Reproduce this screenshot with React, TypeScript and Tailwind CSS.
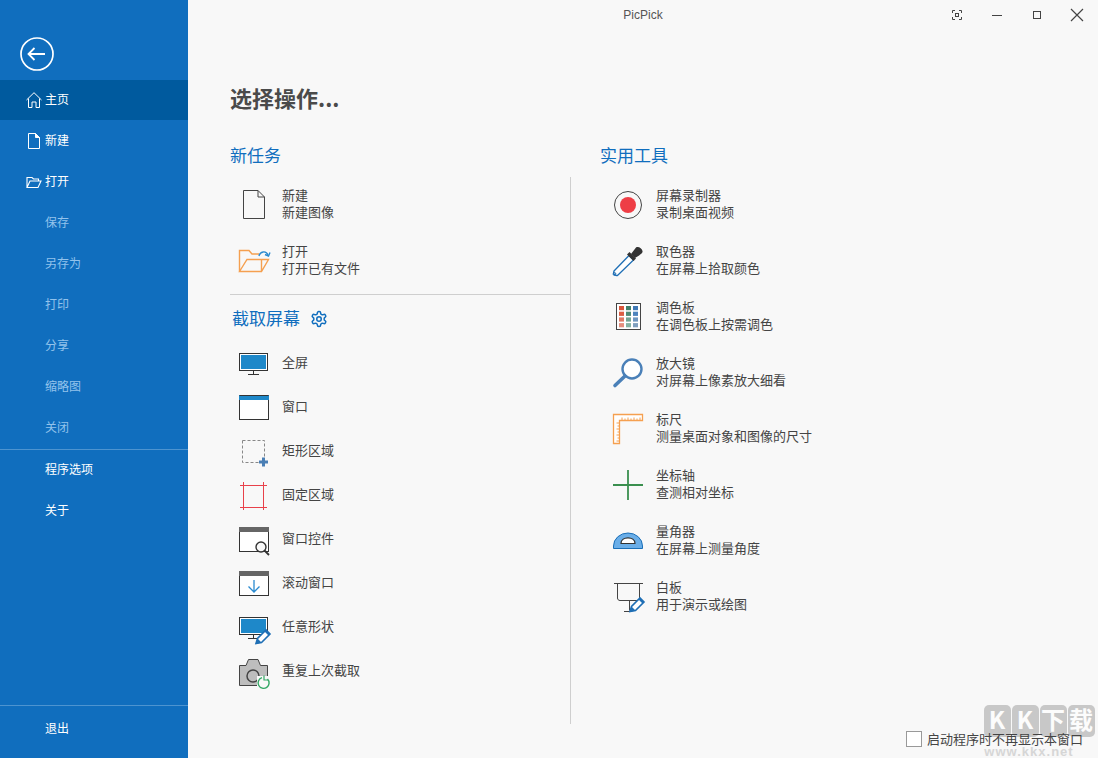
import { ReactNode } from "react";

const font = { fontFamily: '"Noto Sans CJK SC", "Liberation Sans", sans-serif' };

const Icon = ({ children, size = 32 }: { children: ReactNode; size?: number }) => (
  <svg width={size} height={size} viewBox={`0 0 ${size} ${size}`} fill="none" className="shrink-0 overflow-visible">
    {children}
  </svg>
);

const Pen = ({ x, y }: { x: number; y: number }) => (
  <g transform={`translate(${x} ${y})`}>
    <path d="M1 14.5 2.5 9.5 11 1 15 5 6.500 13.500Z" fill="#fff" stroke="#1f6fb5" strokeWidth="1.600" />
    <path d="M0.500 15 2.500 9.500 6.500 13.500Z M9.500 2.500 13.500 6.500 15 5 11 1Z" fill="#1f6fb5" />
  </g>
);

const icons: Record<string, ReactNode> = {
  doc: (
    <Icon>
      <path d="M5.500 1.500H20L26.500 8V29.500H5.500Z M20 1.500V8H26.500" stroke="#444" />
    </Icon>
  ),
  open: (
    <Icon>
      <path d="M1.500 26.500V5.500H11L14 9H21 M1.500 26.500 9 14.500H30.500L23.500 26.500Z M23.500 26.500V14.500" stroke="#f5a050" strokeWidth="1.400" />
      <path d="M21 11C22 6.500 28 5 30 10" stroke="#2b8bd0" strokeWidth="1.400" />
      <path d="M27 9.500 30.500 11 32 7.500" stroke="#2b8bd0" strokeWidth="1.400" />
    </Icon>
  ),
  monitor: (
    <Icon>
      <rect x="1.500" y="6.500" width="28" height="17" fill="#fff" stroke="#333" />
      <rect x="3" y="8" width="25" height="14" fill="#1e88c9" />
      <path d="M15.500 24V27.500 M10 27.500H21" stroke="#333" />
    </Icon>
  ),
  window: (
    <Icon>
      <rect x="1.500" y="4.500" width="29" height="24" fill="#fff" stroke="#333" />
      <rect x="1" y="4" width="30" height="5" fill="#1e88c9" />
      <path d="M1.500 4.500H30.500" stroke="#333" />
    </Icon>
  ),
  rect: (
    <Icon>
      <rect x="4.500" y="5.500" width="22" height="22" stroke="#888" strokeDasharray="3 2" />
      <path d="M25.500 22.500V31.500 M21 27H30" stroke="#4a7fb5" strokeWidth="3" />
    </Icon>
  ),
  fixed: (
    <Icon>
      <path d="M2 6.500H29 M2 28.500H29 M5.500 3V31 M25.500 3V31" stroke="#e8414a" />
    </Icon>
  ),
  control: (
    <Icon>
      <rect x="1.500" y="4.500" width="29" height="24" fill="#fff" stroke="#333" />
      <rect x="1" y="4" width="30" height="5" fill="#666" />
      <circle cx="23" cy="24" r="5" fill="#f8f8f8" stroke="#333" strokeWidth="1.400" />
      <path d="M26.500 27.500 31 32" stroke="#333" strokeWidth="1.800" />
    </Icon>
  ),
  scroll: (
    <Icon>
      <rect x="1.500" y="4.500" width="29" height="24" fill="#fff" stroke="#333" />
      <rect x="1" y="4" width="30" height="5" fill="#666" />
      <path d="M16 13V24.500 M10.500 19.500 16 25 21.500 19.500" stroke="#2b8bd0" strokeWidth="1.300" />
    </Icon>
  ),
  free: (
    <Icon>
      <rect x="1.500" y="6.500" width="28" height="17" fill="#fff" stroke="#333" />
      <rect x="3" y="8" width="25" height="14" fill="#1e88c9" />
      <path d="M15.500 24V27.500 M10 27.500H19" stroke="#333" />
      <Pen x={17} y={18} />
    </Icon>
  ),
  camera: (
    <Icon>
      <path d="M1.500 30.500V10.500H8L10.500 4.500H20L22.500 10.500H29.500V30.500Z" fill="#bdbdbd" stroke="#444" />
      <circle cx="15" cy="21" r="6" fill="#bdbdbd" stroke="#444" strokeWidth="1.500" />
      <rect x="19" y="21" width="13" height="13" fill="#f8f8f8" />
      <path d="M24 22.600A5.500 5.500 0 1 0 29.500 24" stroke="#35a866" strokeWidth="1.400" />
      <path d="M26 20.500V25H30" stroke="#35a866" strokeWidth="1.200" />
    </Icon>
  ),
  record: (
    <Icon>
      <circle cx="17" cy="16" r="13.500" fill="#f8f8f8" stroke="#444" />
      <circle cx="17" cy="16" r="8" fill="#ee3e46" />
    </Icon>
  ),
  dropper: (
    <Icon>
      <path d="M3 26 18 10.500 22.500 15 7 30C5.500 31.500 1.500 30 3 26Z" fill="#fff" stroke="#1f6fb5" strokeWidth="1.300" />
      <circle cx="3.500" cy="29" r="1.400" stroke="#1f6fb5" />
      <path d="M16 9.500 18.500 7 25 13.500 22.500 16Z" fill="#333" />
      <path d="M20 9 25 2.500C27 1 31 3 31.500 6 32 8 30 9.500 24 13Z" fill="#333" />
    </Icon>
  ),
  palette: (
    <Icon>
      <rect x="5.500" y="2.500" width="24" height="26" fill="#fff" stroke="#444" />
      {[
        ["#d9543a", "#41806a", "#3f78b5"],
        ["#dc5f45", "#4f8c76", "#4d83bd"],
        ["#e07a66", "#72a594", "#6f97c0"],
        ["#e58f7e", "#85b3a3", "#7f9fbf"],
      ].map((row, r) =>
        row.map((c, i) => <rect key={`${r}-${i}`} x={8 + i * 7} y={5 + r * 5.700} width="5" height="4.200" fill={c} />),
      )}
    </Icon>
  ),
  magnifier: (
    <Icon>
      <circle cx="21" cy="12" r="9.500" fill="#fff" stroke="#4a80b8" strokeWidth="2.400" />
      <path d="M14 19 4 28.500" stroke="#4a80b8" strokeWidth="3.600" strokeLinecap="round" />
    </Icon>
  ),
  ruler: (
    <Icon>
      <path d="M2.500 1.500H31.500V7.500H8.500V30.500H2.500Z" fill="#fff" stroke="#f5a050" strokeWidth="1.300" />
      <path d="M11 7V4.500 M14 7V5.500 M17 7V4.500 M20 7V5.500 M23 7V4.500 M26 7V5.500 M29 7V4.500 M8 10H5.500 M8 13H6.500 M8 16H5.500 M8 19H6.500 M8 22H5.500 M8 25H6.500 M8 28H5.500" stroke="#f5a050" />
    </Icon>
  ),
  axis: (
    <Icon>
      <path d="M17 1V31 M2 16H32" stroke="#3a8f4f" strokeWidth="1.800" />
    </Icon>
  ),
  protractor: (
    <Icon>
      <path d="M2.500 23.500V21A14.500 13 0 0 1 31.500 21V23.500Z" fill="#6aaee8" stroke="#1a6fb8" />
      <path d="M10 18.500C10 11 24 11 24 18.500Z" fill="#fff" stroke="#333" strokeWidth="1.200" />
    </Icon>
  ),
  board: (
    <Icon>
      <path d="M3 2.500H32 M6.500 2.500V17C6.500 18.500 7.500 19.500 9 19.500H28.500V2.500 M18.500 19.500V29.500 M13 30.500H21" stroke="#444" />
      <Pen x={18} y={16} />
    </Icon>
  ),
};

const nav = [
  { label: "主页", icon: "home", active: true },
  { label: "新建", icon: "new" },
  { label: "打开", icon: "folder" },
  { label: "保存", muted: true },
  { label: "另存为", muted: true },
  { label: "打印", muted: true },
  { label: "分享", muted: true },
  { label: "缩略图", muted: true },
  { label: "关闭", muted: true },
];

const NavIcon = ({ name }: { name?: string }) => {
  if (name === "home")
    return (
      <svg width="16" height="16" viewBox="0 0 16 16" fill="none" stroke="#fff">
        <path d="M0.500 8 8 0.700 15.500 8 M2.500 6.500V15.500H6V10H10V15.500H13.500V6.500" />
      </svg>
    );
  if (name === "new")
    return (
      <svg width="16" height="16" viewBox="0 0 16 16" fill="none" stroke="#fff">
        <path d="M2.500 0.500H9.500L13.500 4.500V15.500H2.500Z" />
        <path d="M9.500 0.500 13.500 4.500H9.500Z" fill="#fff" />
      </svg>
    );
  if (name === "folder")
    return (
      <svg width="16" height="16" viewBox="0 0 16 16" fill="none" stroke="#fff" strokeWidth="1.100">
        <path d="M1 13.500V3.500H6L7.500 5H12.500V7 M1 13.500 4 7H15L12 13.500Z" />
      </svg>
    );
  return null;
};

const NavRow = ({ label, icon, active, muted }: { label: string; icon?: string; active?: boolean; muted?: boolean }) => (
  <div className={`flex h-[40px] items-center pl-[26px] text-[12px] ${active ? "bg-[#005a9e]" : ""} ${muted ? "text-[#93c3ec]" : "text-white"}`}>
    <span className="flex w-[19px] shrink-0">
      <NavIcon name={icon} />
    </span>
    <span className="pb-[2px]">{label}</span>
  </div>
);

const left = [
  { icon: "doc", title: "新建", sub: "新建图像" },
  { icon: "open", title: "打开", sub: "打开已有文件" },
];

const capture = [
  { icon: "monitor", title: "全屏" },
  { icon: "window", title: "窗口" },
  { icon: "rect", title: "矩形区域" },
  { icon: "fixed", title: "固定区域" },
  { icon: "control", title: "窗口控件" },
  { icon: "scroll", title: "滚动窗口" },
  { icon: "free", title: "任意形状" },
  { icon: "camera", title: "重复上次截取" },
];

const tools = [
  { icon: "record", title: "屏幕录制器", sub: "录制桌面视频" },
  { icon: "dropper", title: "取色器", sub: "在屏幕上拾取颜色" },
  { icon: "palette", title: "调色板", sub: "在调色板上按需调色" },
  { icon: "magnifier", title: "放大镜", sub: "对屏幕上像素放大细看" },
  { icon: "ruler", title: "标尺", sub: "测量桌面对象和图像的尺寸" },
  { icon: "axis", title: "坐标轴", sub: "查测相对坐标" },
  { icon: "protractor", title: "量角器", sub: "在屏幕上测量角度" },
  { icon: "board", title: "白板", sub: "用于演示或绘图" },
];

const Task = ({ icon, title, sub, gap }: { icon: string; title: string; sub?: string; gap: string }) => (
  <div className={`flex items-center text-[13px] leading-[17px] text-[#444] ${sub ? "h-[56px]" : "h-[44px]"} ${gap}`}>
    {icons[icon]}
    <div className="pb-[4px]">
      <div>{title}</div>
      {sub && <div>{sub}</div>}
    </div>
  </div>
);

export default function App() {
  return (
    <div className="relative flex h-[758px] w-[1098px] overflow-hidden bg-[#f8f8f8]" style={font}>
      <aside className="flex w-[188px] shrink-0 flex-col bg-[#106ebe] pt-[37px]">
        <div className="mb-[9px] ml-[20px] h-[34px]">
          <svg width="34" height="34" viewBox="0 0 34 34" fill="none" stroke="#fff" strokeWidth="1.700">
            <circle cx="17" cy="17" r="16" />
            <path d="M25 17H9 M14.500 11 8.500 17 14.500 23" strokeWidth="1.800" />
          </svg>
        </div>
        <nav className="flex flex-col gap-px">
          {nav.map((n) => (
            <NavRow key={n.label} {...n} />
          ))}
        </nav>
        <div className="mt-[1px] border-t border-[#4d94d0] pt-0">
          <div className="flex flex-col gap-px">
            <NavRow label="程序选项" />
            <NavRow label="关于" />
          </div>
        </div>
        <div className="mt-auto mb-[9px] border-t border-[#4d94d0] pt-[3px]">
          <NavRow label="退出" />
        </div>
      </aside>

      <main className="flex min-w-0 flex-1 flex-col">
        <header className="grid h-[30px] shrink-0 grid-cols-[1fr_auto_1fr] items-center">
          <div />
          <div className="text-[12px] text-[#555]" style={{ fontFamily: '"Liberation Sans", sans-serif' }}>
            PicPick
          </div>
          <div className="flex justify-end pr-px">
            <button className="flex h-[30px] w-[40px] items-center justify-center">
              <svg width="10" height="10" viewBox="0 0 10 10" fill="none" stroke="#444">
                <path d="M0.500 3V0.500H3 M7 0.500H9.500V3 M0.500 7V9.500H3 M7 9.500H9.500V7" />
                <rect x="3.500" y="3.500" width="3" height="3" />
              </svg>
            </button>
            <button className="flex h-[30px] w-[40px] items-center justify-center">
              <svg width="10" height="10" viewBox="0 0 10 10" stroke="#444">
                <path d="M0 5.500H10" />
              </svg>
            </button>
            <button className="flex h-[30px] w-[40px] items-center justify-center">
              <svg width="10" height="10" viewBox="0 0 10 10" fill="none" stroke="#444">
                <rect x="1.500" y="1.500" width="7" height="7" />
              </svg>
            </button>
            <button className="flex h-[30px] w-[40px] items-center justify-center">
              <svg width="14" height="14" viewBox="0 0 14 14" stroke="#444" strokeWidth="1.200">
                <path d="M1 1 13 13 M13 1 1 13" />
              </svg>
            </button>
          </div>
        </header>

        <div className="flex-1 pl-[42px]">
          <h1 className="mt-[55px] h-[30px] text-[22px] leading-[24px] font-bold text-[#4a4a4a]">选择操作...</h1>
          <div className="mt-[29px] flex">
            <section className="w-[340px] shrink-0">
              <h2 className="h-[24px] text-[17px] leading-[22px] text-[#106ebe]">新任务</h2>
              <div className="mt-[9px]">
                {left.map((t) => (
                  <Task key={t.title} {...t} gap="gap-[12px] pl-[8px]" />
                ))}
              </div>
              <div className="mt-[5px] border-t border-[#cfcfcf]" />
              <h2 className="mt-[12px] flex h-[24px] items-center gap-[10px] pl-[2px] text-[17px] leading-[22px] text-[#106ebe]">
                <span className="pb-[2px]">截取屏幕</span>
                <svg width="18" height="18" viewBox="0 0 24 24" fill="none" stroke="#106ebe" strokeWidth="2" strokeLinejoin="round">
                  <path d="M12.220 2h-.44a2 2 0 0 0-2 2v.18a2 2 0 0 1-1 1.730l-.43.250a2 2 0 0 1-2 0l-.15-.080a2 2 0 0 0-2.730.730l-.22.380a2 2 0 0 0 .730 2.730l.15.100a2 2 0 0 1 1 1.720v.510a2 2 0 0 1-1 1.740l-.15.090a2 2 0 0 0-.730 2.730l.22.380a2 2 0 0 0 2.730.730l.15-.080a2 2 0 0 1 2 0l.43.250a2 2 0 0 1 1 1.730V20a2 2 0 0 0 2 2h.44a2 2 0 0 0 2-2v-.18a2 2 0 0 1 1-1.730l.43-.250a2 2 0 0 1 2 0l.15.080a2 2 0 0 0 2.730-.730l.22-.390a2 2 0 0 0-.730-2.730l-.15-.080a2 2 0 0 1-1-1.740v-.500a2 2 0 0 1 1-1.740l.15-.090a2 2 0 0 0 .730-2.730l-.22-.380a2 2 0 0 0-2.730-.730l-.15.080a2 2 0 0 1-2 0l-.43-.250a2 2 0 0 1-1-1.730V4a2 2 0 0 0-2-2z" />
                  <circle cx="12" cy="12" r="3" />
                </svg>
              </h2>
              <div className="mt-[10px]">
                {capture.map((t) => (
                  <Task key={t.title} {...t} gap="gap-[12px] pl-[8px]" />
                ))}
              </div>
            </section>
            <section className="flex-1">
              <h2 className="h-[24px] pl-[30px] text-[17px] leading-[22px] text-[#106ebe]">实用工具</h2>
              <div className="mt-[10px] h-[547px] border-l border-[#cfcfcf] pl-[40px]">
                <div className="-mt-px">
                  {tools.map((t) => (
                    <Task key={t.title} {...t} gap="gap-[13px]" />
                  ))}
                </div>
              </div>
            </section>
          </div>
        </div>

        <footer className="relative z-10 flex h-[33px] shrink-0 items-start justify-end gap-[5px] pt-[6px] pr-[15px] text-[13px] leading-[15px] text-[#444]">
          <span className="h-[16px] w-[16px] border border-[#999] bg-white" />
          启动程序时不再显示本窗口
        </footer>
      </main>

      <div className="pointer-events-none absolute top-[705px] left-[983px] flex w-[112px] flex-col items-center opacity-70">
        <div className="flex gap-[1px] text-[24px] leading-[26px] font-bold text-white">
          {["K", "K", "下", "载"].map((c, i) => (
            <span key={i} className="flex h-[32px] w-[27px] items-start justify-center rounded-[5px] bg-[#b5b5b5] pt-px">
              {c}
            </span>
          ))}
        </div>
        <div className="mt-[9px] -ml-[20px] text-[13px] leading-[12px] font-bold tracking-[1px] text-[#c8c8c8]" style={{ fontFamily: '"Liberation Sans", sans-serif' }}>
          www.kkx.net
        </div>
      </div>
    </div>
  );
}
